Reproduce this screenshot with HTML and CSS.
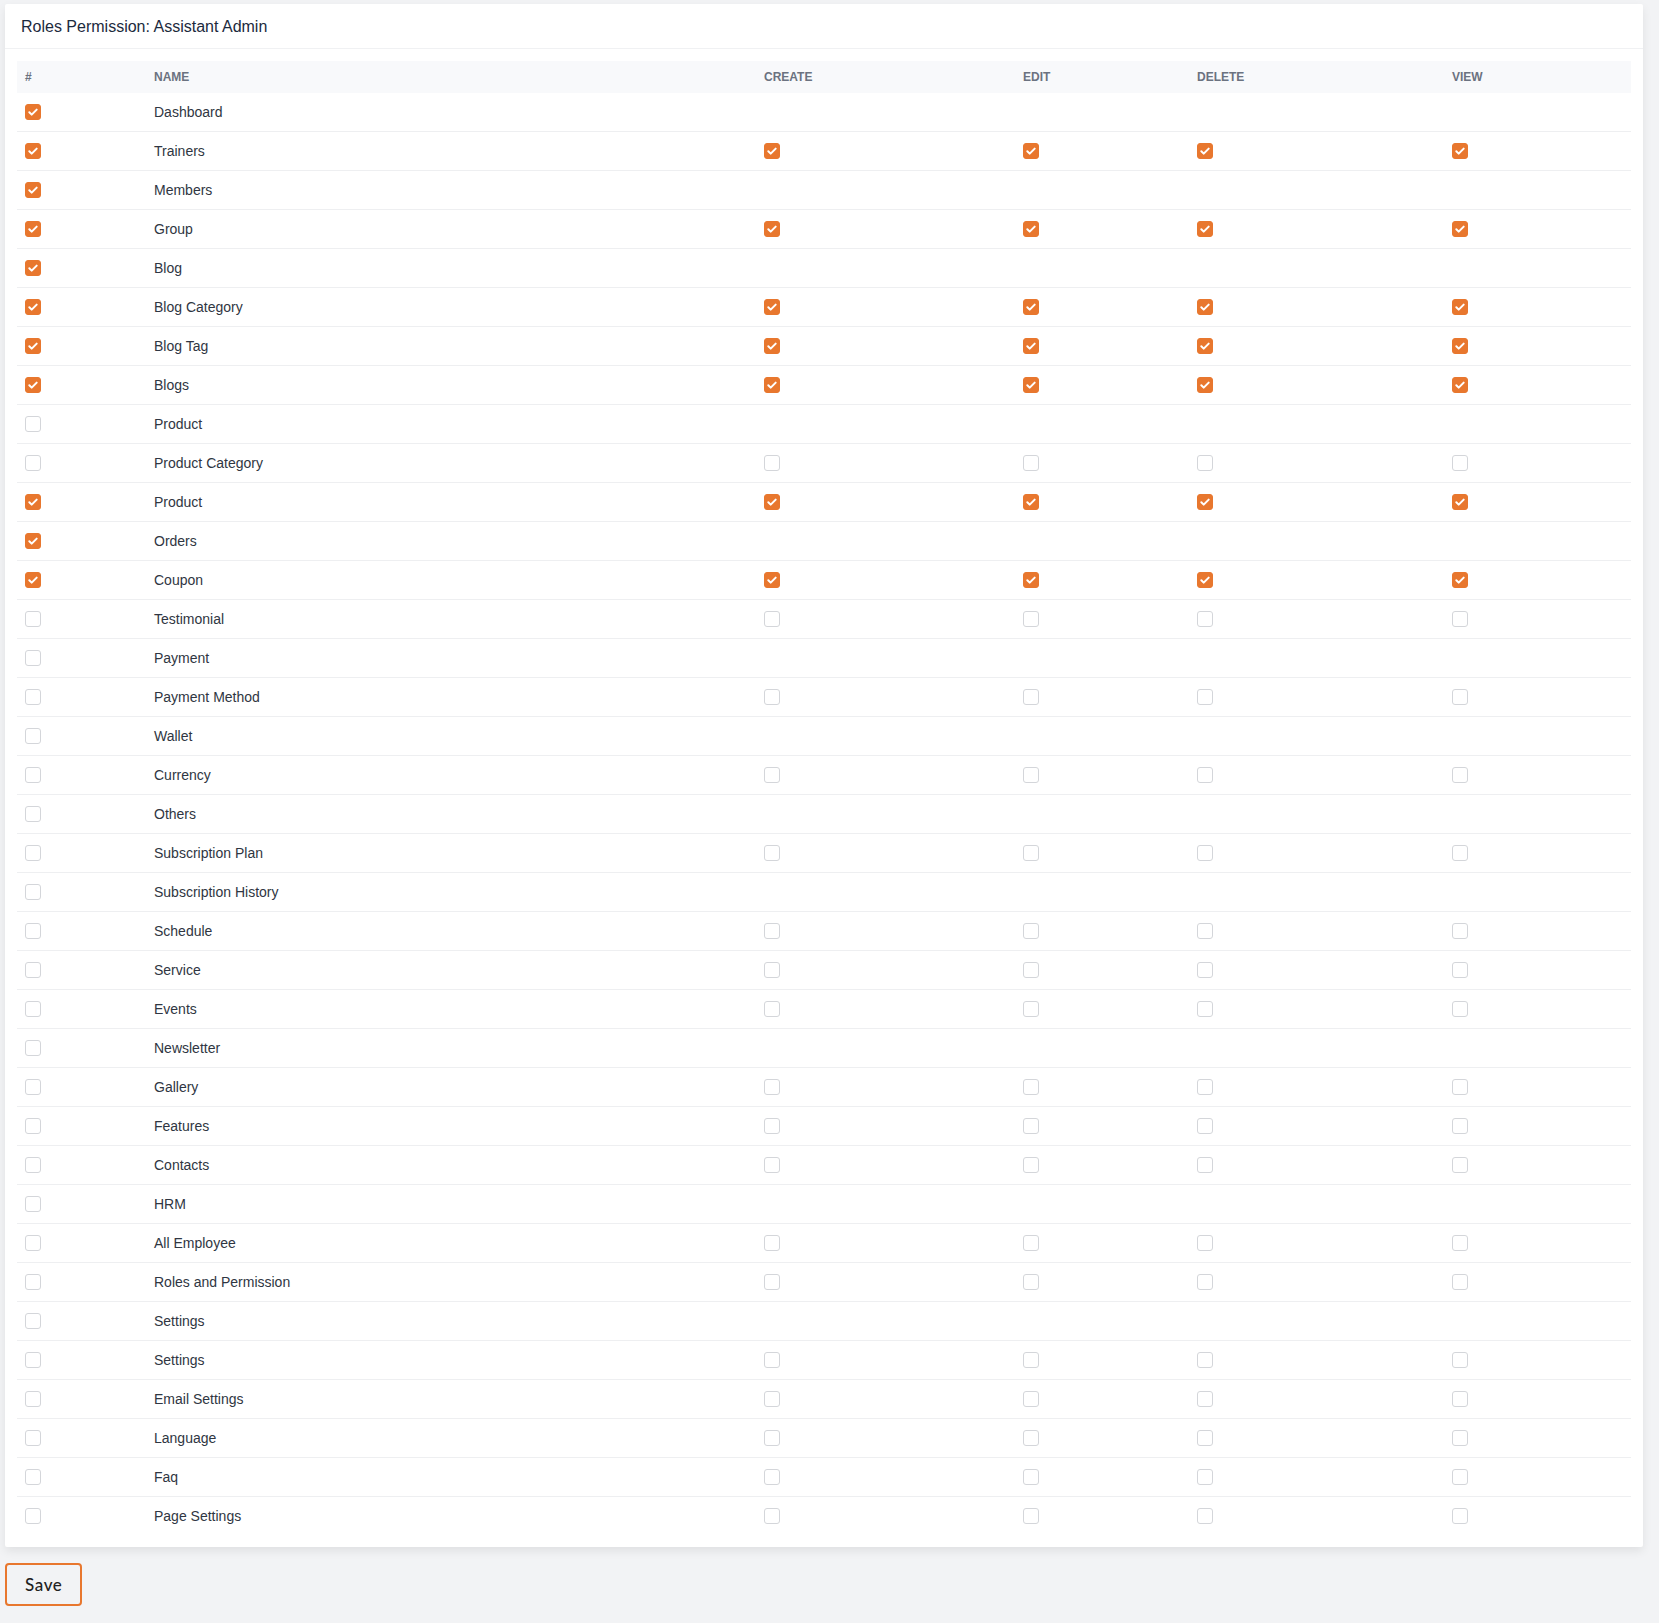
FILE: index.html
```html
<!DOCTYPE html>
<html lang="en">
<head>
    <meta charset="UTF-8">
    <meta name="viewport" content="width=device-width, initial-scale=1.0">
    <title>Roles Permission</title>
    <link rel="stylesheet" href="styles.css">
</head>
<body>

<form class="permission-form" onsubmit="return false">
<div class="card">
    <div class="card-header">Roles Permission: Assistant Admin</div>
    <div class="card-body">
        <table class="permission-table" id="permission-table">
            <colgroup>
                <col class="col-check">
                <col class="col-name">
                <col class="col-create">
                <col class="col-edit">
                <col class="col-delete">
                <col class="col-view">
            </colgroup>
            <thead>
                <tr>
                    <th>#</th>
                    <th>Name</th>
                    <th>Create</th>
                    <th>Edit</th>
                    <th>Delete</th>
                    <th>View</th>
                </tr>
            </thead>
            <tbody></tbody>
        </table>
    </div>
</div>

<button type="submit" class="save-button">Save</button>
</form>

<script>
    // [name, has create/edit/delete/view, checked]
    const modules = [
        ["Dashboard", false, true],
        ["Trainers", true, true],
        ["Members", false, true],
        ["Group", true, true],
        ["Blog", false, true],
        ["Blog Category", true, true],
        ["Blog Tag", true, true],
        ["Blogs", true, true],
        ["Product", false, false],
        ["Product Category", true, false],
        ["Product", true, true],
        ["Orders", false, true],
        ["Coupon", true, true],
        ["Testimonial", true, false],
        ["Payment", false, false],
        ["Payment Method", true, false],
        ["Wallet", false, false],
        ["Currency", true, false],
        ["Others", false, false],
        ["Subscription Plan", true, false],
        ["Subscription History", false, false],
        ["Schedule", true, false],
        ["Service", true, false],
        ["Events", true, false],
        ["Newsletter", false, false],
        ["Gallery", true, false],
        ["Features", true, false],
        ["Contacts", true, false],
        ["HRM", false, false],
        ["All Employee", true, false],
        ["Roles and Permission", true, false],
        ["Settings", false, false],
        ["Settings", true, false],
        ["Email Settings", true, false],
        ["Language", true, false],
        ["Faq", true, false],
        ["Page Settings", true, false]
    ];

    function checkbox(checked) {
        return '<input type="checkbox" class="perm-check"' + (checked ? ' checked' : '') + '>';
    }

    const tbody = document.querySelector("#permission-table tbody");
    let html = "";
    modules.forEach(function (m) {
        html += '<tr>';
        html += '<td>' + checkbox(m[2]) + '</td>';
        html += '<td>' + m[0] + '</td>';
        for (let i = 0; i < 4; i++) {
            html += '<td>' + (m[1] ? checkbox(m[2]) : '') + '</td>';
        }
        html += '</tr>';
    });
    tbody.innerHTML = html;
</script>

</body>
</html>
```

FILE: styles.css
```css
body {
    font-family: 'Liberation Sans', Arial, sans-serif;
    margin: 0;
    padding: 4px 16px 16px 5px;
    background-color: #f2f3f5;
    color: #374151;
}
.card {
    background-color: #fff;
    border-radius: 2px;
    box-shadow: 0 4px 10px rgba(0, 0, 0, 0.08);
}
.card-header {
    padding: 13px 16px 11px;
    font-size: 16px;
    line-height: 20px;
    color: #1c2a3d;
    border-bottom: 1px solid #f0f1f3;
}
.card-body {
    padding: 12px;
}
.permission-table {
    width: 100%;
    border-collapse: collapse;
    table-layout: fixed;
    font-size: 14px;
}
.col-check { width: 129px; }
.col-name { width: 610px; }
.col-create { width: 259px; }
.col-edit { width: 174px; }
.col-delete { width: 255px; }
.col-view { width: 187px; }
.permission-table th {
    background-color: #f8f9fb;
    color: #6b7280;
    font-size: 12px;
    font-weight: 700;
    text-transform: uppercase;
    text-align: left;
    height: 32px;
    padding: 0 8px;
}
.permission-table td {
    height: 38px;
    padding: 0 8px;
    color: #2f3642;
    vertical-align: middle;
}
.permission-table tbody tr + tr td {
    border-top: 1px solid #eeeff1;
}
.perm-check {
    appearance: none;
    -webkit-appearance: none;
    width: 16px;
    height: 16px;
    margin: 0;
    display: block;
    border: 1px solid #d4d6da;
    border-radius: 3px;
    background-color: #fff;
    cursor: pointer;
}
.perm-check:checked {
    border-color: #e8772e;
    background-color: #e8772e;
    background-image: url("data:image/svg+xml,%3Csvg xmlns='http://www.w3.org/2000/svg' viewBox='0 0 16 16'%3E%3Cpath d='M4.3 8.2l2.4 2.4 5-5' fill='none' stroke='white' stroke-width='2' stroke-linecap='round' stroke-linejoin='round'/%3E%3C/svg%3E");
    background-size: 16px 16px;
    background-position: center;
}
.save-button {
    margin-top: 16px;
    padding: 7px 18px;
    font-family: 'Lato', 'Open Sans', sans-serif;
    font-size: 17px;
    font-weight: 500;
    line-height: 25px;
    letter-spacing: 0.6px;
    color: #222;
    background-color: transparent;
    border: 2px solid #e8772e;
    border-radius: 4px;
    cursor: pointer;
}
```
